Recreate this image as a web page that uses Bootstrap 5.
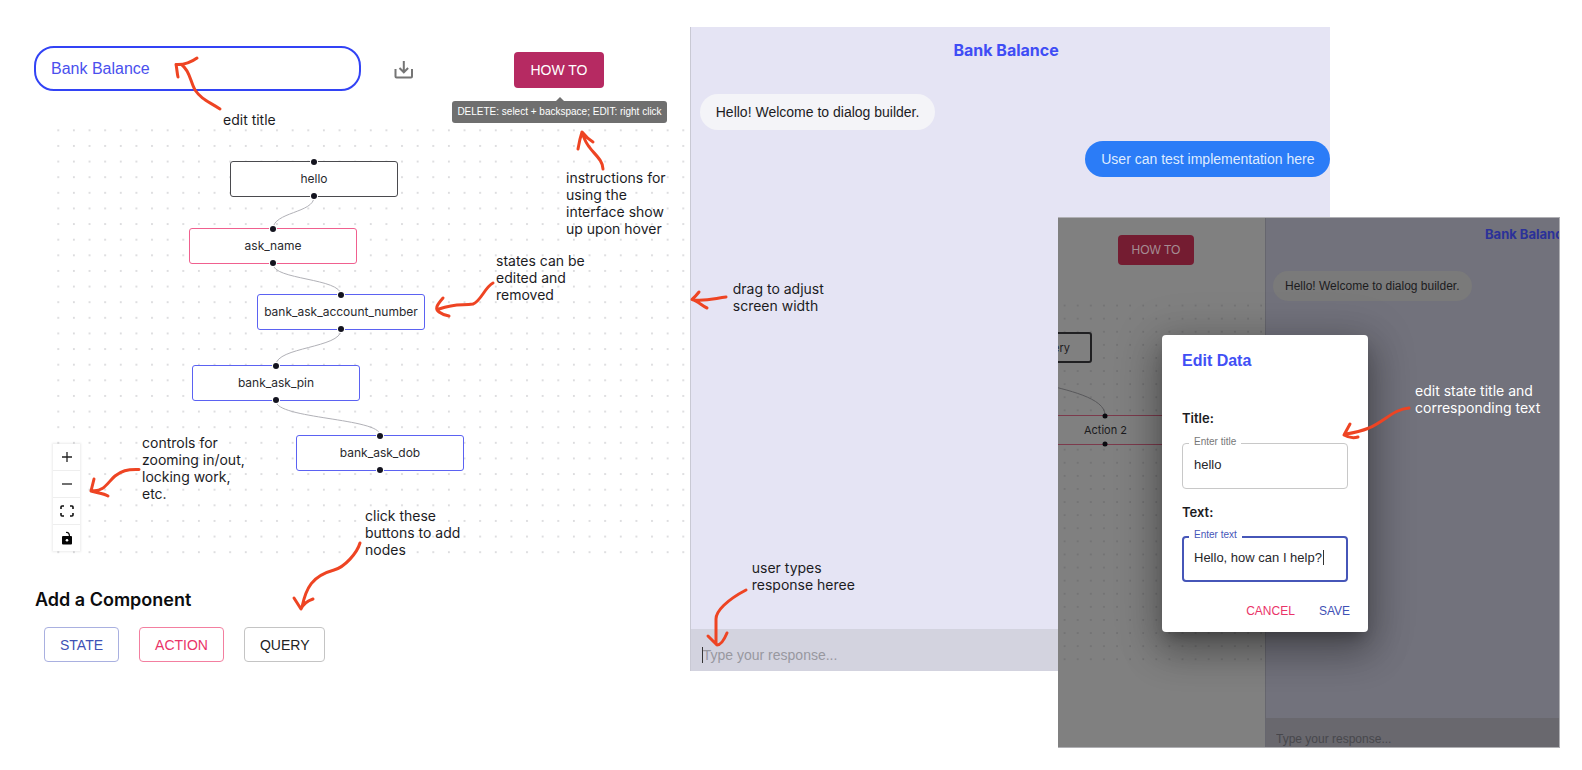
<!DOCTYPE html>
<html lang="en">
<head>
<meta charset="utf-8">
<meta name="viewport" content="width=device-width, initial-scale=1">
<title>Dialog Builder</title>
<link href="https://cdn.jsdelivr.net/npm/bootstrap@5.3.0/dist/css/bootstrap.min.css" rel="stylesheet">
<style>
  body { font-family: Inter, "Liberation Sans", sans-serif; color: #1c1c1f; background: #fff; }
  .board { padding: 27px 0 98px; }
  .builder { width: 43.6%; }
  .chat { width: 40.5%; background: #e5e4f4; border-left: 1px solid #c9c9d4; }

  /* builder header */
  .builder-head { padding: 19px 0 0 34px; height: 64px; }
  .title-input { width: 327px; height: 45px; border: 2px solid #3243f5; border-radius: 20px; padding: 0 15px; font: 16px/24px "Liberation Sans", sans-serif; color: #4a50ee; background: #fff; }
  .icon-btn { width: 24px; height: 24px; margin-left: 31px; margin-right: 98px; }
  .mui-btn { font: 14px/20px "Liberation Sans", sans-serif; border-radius: 4px; padding: 0 15px; height: 35px; }
  .howto { width: 90px; height: 36px; margin-top: 2px; background: #b62a62; color: #fff; }
  .howto:hover { background: #b62a62; color: #fff; }
  .hint { top: 74px; left: 452px; width: 215px; height: 22px; background: #6f6f6f; color: #fff; border-radius: 3px; font: 10px/22px "Liberation Sans", sans-serif; z-index: 3; }
  .hint::before { content: ""; position: absolute; left: 103px; top: -4px; border: 5px solid transparent; border-top: 0; border-bottom-color: #6f6f6f; }

  /* flow canvas */
  .flow { height: 440px; margin-top: 31px; }
  .flow > svg { position: absolute; inset: 0; width: 100%; height: 100%; }
  .node { position: absolute; width: 168px; height: 36px; border: 1px solid #5b62f2; border-radius: 3px; background: #fff; font-size: 12px; line-height: 34px; text-align: center; color: #2a2a2e; }
  .node::before, .node::after { content: ""; position: absolute; left: 50%; width: 6px; height: 6px; margin-left: -3px; border-radius: 50%; background: #14141f; box-shadow: 0 0 0 1px #fff; }
  .node::before { top: -3px; }
  .node::after { bottom: -3px; }
  .n-hello { left: 230px; top: 39px; border-color: #4a4a4e; }
  .n-name { left: 189px; top: 106px; border-color: #f0608f; }
  .n-account { left: 257px; top: 172px; }
  .n-pin { left: 192px; top: 243px; }
  .n-dob { left: 296px; top: 313px; }
  .controls { left: 53px; top: 322px; width: 27px; box-shadow: 0 0 2px 1px rgba(0,0,0,.08); }
  .controls button { height: 27px; background: #fff; border: 0; border-bottom: 1px solid #eee; padding: 0; }
  .controls button:last-child { height: 26px; border-bottom: 0; }

  .add-title { font-size: 18px; font-weight: 600; line-height: 24px; padding: 26px 0 0 35px; color: #0c0c0e; }
  .add-row { padding: 15px 0 9px 44px; gap: 20px; }
  .b-state { border: 1px solid #a9b0e0; color: #3f51b5; }
  .b-action { border: 1px solid #f37fa0; color: #ea3368; }
  .b-query { border: 1px solid #c4c4c4; color: #222; }

  /* conversation */
  .chat-title { font-size: 16px; line-height: 24px; font-weight: 700; color: #3f4df5; padding: 11px 9px 0 0; }
  .bubble { height: 36px; line-height: 36px; border-radius: 18px; padding: 0 16px; font-size: 14px; font-family: "Liberation Sans", sans-serif; }
  .b-bot { background: #f4f4f8; margin: 32px 0 0 9px; }
  .b-user { background: #2b7cf7; color: #dfebff; margin-top: 11px; }
  .chat-bar { background: #d3d3df; height: 42px; }
  .chat-bar input, .dim-bar input { border: 0; background: transparent; width: 100%; outline: 0; padding: 0; font-family: "Liberation Sans", sans-serif; }
  .chat-bar input { font-size: 14px; height: 32px; margin: 10px 0 0 12px; }
  .chat-bar input::placeholder { color: #98989f; opacity: 1; }
  .caret { position: absolute; width: 1px; height: 16px; background: #333; }
  .chat-bar .caret { left: 11px; top: 18px; }

  /* hand-drawn notes */
  .note { position: absolute; font-size: 14px; line-height: 17px; white-space: nowrap; z-index: 4; margin: 0; }
  .arrows { position: absolute; left: 0; top: 0; width: 100%; height: 100%; overflow: visible; pointer-events: none; z-index: 5; fill: none; stroke: #ee4423; stroke-width: 3; stroke-linecap: round; stroke-linejoin: round; }

  /* second window with the edit dialog */
  .shot { position: absolute; right: 22px; top: 217px; width: 502px; height: 531px; z-index: 6; background: #808080; border: solid #b0b0b4; border-width: 1px 1px 1px 0; }
  .shot-clip { overflow: hidden; }
  .dim-left { width: 207px; }
  .dim-right { background: #72727c; border-left: 1px solid #66666e; min-width: 0; }
  .dim-howto { width: 76px; height: 30px; margin: 17px 0 0 60px; padding: 0; font-size: 12px; background: #741c31; color: #a58c93; }
  .dim-title { font-size: 13px; line-height: 20px; font-weight: 700; color: #2b3199; padding: 6px 0 0 219px; white-space: nowrap; }
  .dim-bubble { height: 30px; line-height: 30px; border-radius: 15px; background: #7a7a7a; padding: 0 12px; margin: 27px 0 0 7px; font-size: 12px; font-family: "Liberation Sans", sans-serif; color: #1c1c1e; }
  .dim-bar { background: #69686e; height: 29px; }
  .dim-bar input { font-size: 12px; height: 22px; margin: 10px 0 0 10px; }
  .dim-bar input::placeholder { color: #47474c; opacity: 1; }
  .dim-flow { position: absolute; left: 0; top: 0; width: 207px; height: 100%; }
  .dim-node { position: absolute; background: #808080; font-size: 11px; color: #1c1c1e; text-align: center; line-height: 28px; height: 30px; }
  .d-query { left: -50px; top: 114px; width: 84px; height: 31px; border: 2px solid #202022; border-radius: 3px; text-align: right; padding-right: 20px; }
  .d-action { left: -22px; top: 197px; width: 139px; border: 1px solid #7c3a4c; }

  .edit-card { position: absolute; left: 104px; top: 117px; width: 206px; padding: 15px 18px 9px 20px; background: #fff; border-radius: 4px; box-shadow: 0 9px 12px -5px rgba(0,0,0,.25), 0 18px 36px 4px rgba(0,0,0,.25), 0 6px 44px 8px rgba(0,0,0,.15); z-index: 2; }
  .edit-card h2 { font: bold 16px/22px "Liberation Sans", sans-serif; color: #414ff5; margin: 0 0 36px; }
  .edit-card h3 { font-size: 13px; line-height: 20px; font-weight: 600; margin: 0; color: #1c1c1f; }
  .field { position: relative; margin: 15px 0 13px; }
  .field input { display: block; width: 166px; height: 46px; border: 1px solid #c8c8c8; border-radius: 4px; padding: 0 11px 4px; font: 13px/20px "Liberation Sans", sans-serif; color: #26262a; outline: 0; background: #fff; }
  .field label { position: absolute; left: 7px; top: -7px; padding: 0 5px; font: 10px/12px "Liberation Sans", sans-serif; color: #777; background: #fff; }
  .field.on { margin: 14px 0 17px; }
  .field.on input { border: 2px solid #4656b8; padding-left: 10px; }
  .field.on label { color: #4656b8; }
  .field .caret { left: 141px; top: 14px; height: 15px; }
  .edit-card .btn { font: 12px/20px "Liberation Sans", sans-serif; padding: 2px 0; border: 0; }
  .b-cancel { color: #ea3368; }
  .b-save { color: #3f51b5; }
</style>
</head>
<body>
<main class="board position-relative d-flex">

  <section class="builder position-relative">
    <div class="builder-head d-flex align-items-center">
      <input class="title-input" type="text" value="Bank Balance" aria-label="Dialog title">
      <button class="icon-btn btn p-0 border-0 d-flex flex-shrink-0" type="button" aria-label="Download">
        <svg width="24" height="24" viewBox="0 0 24 24" fill="none" stroke="#757575" stroke-width="2"><path d="M3.500 12v7.500q0 1 1 1h14.500q1 0 1-1V12M11.800 4v11M7.500 11l4.300 4.300 4.300-4.300"/></svg>
      </button>
      <button class="mui-btn howto btn border-0 flex-shrink-0" type="button">HOW TO</button>
    </div>
    <div class="hint position-absolute text-center text-nowrap" role="tooltip">DELETE: select + backspace; EDIT: right click</div>

    <div class="flow position-relative">
      <svg aria-hidden="true">
        <defs>
          <pattern id="dots" x="50.500" y=".5" width="15.625" height="15.625" patternUnits="userSpaceOnUse"><circle cx="7.800" cy="7.800" r=".7" fill="#a8a8ad"/></pattern>
        </defs>
        <rect x="51" y="1" width="639" height="436" fill="url(#dots)"/>
        <g fill="none" stroke="#b1b1b7">
          <path d="M314 75C314 91 273 90 273 107"/>
          <path d="M273 142C273 158 341 156 341 173"/>
          <path d="M341 208C341 226 276 225 276 243"/>
          <path d="M276 279C276 297 380 296 380 313"/>
        </g>
      </svg>
      <div class="node n-hello">hello</div>
      <div class="node n-name">ask_name</div>
      <div class="node n-account">bank_ask_account_number</div>
      <div class="node n-pin">bank_ask_pin</div>
      <div class="node n-dob">bank_ask_dob</div>
      <div class="controls position-absolute d-flex flex-column">
        <button type="button" aria-label="Zoom in"><svg class="d-block mx-auto" width="12" height="12" stroke="#222" stroke-width="1.300"><path d="M6 1v10M1 6h10"/></svg></button>
        <button type="button" aria-label="Zoom out"><svg class="d-block mx-auto" width="12" height="12" stroke="#222" stroke-width="1.300"><path d="M1 6h10"/></svg></button>
        <button type="button" aria-label="Fit view"><svg class="d-block mx-auto" width="14" height="12" fill="none" stroke="#111" stroke-width="1.600"><path d="M1 4V2q0-1 1-1h2M10 1h2q1 0 1 1v2M13 8v2q0 1-1 1h-2M4 11H2q-1 0-1-1V8"/></svg></button>
        <button type="button" aria-label="Lock"><svg class="d-block mx-auto" width="12" height="14" viewBox="0 0 12 14"><path d="M5 1.500Q8.500 1 8.500 5.500" fill="none" stroke="#111" stroke-width="1.200"/><rect x="1" y="5" width="10" height="8.500" rx="1" fill="#050505"/><circle cx="6" cy="9.200" r="1.300" fill="#fff"/></svg></button>
      </div>
    </div>

    <h2 class="add-title m-0">Add a Component</h2>
    <div class="add-row d-flex">
      <button class="mui-btn b-state btn" type="button">STATE</button>
      <button class="mui-btn b-action btn" type="button">ACTION</button>
      <button class="mui-btn b-query btn" type="button">QUERY</button>
    </div>

    <p class="note" style="left:223px;top:84px">edit title</p>
    <p class="note" style="left:566px;top:142px">instructions for<br>using the<br>interface show<br>up upon hover</p>
    <p class="note" style="left:496px;top:225px">states can be<br>edited and<br>removed</p>
    <p class="note" style="left:142px;top:407px">controls for<br>zooming in/out,<br>locking work,<br>etc.</p>
    <p class="note" style="left:365px;top:480px">click these<br>buttons to add<br>nodes</p>
    <svg class="arrows" aria-hidden="true"><g transform="translate(0 -27)">
      <path d="M220 109C208 101 202 100 195 90C190 81 190 71 182 65M197 58C190 63 184 65 176 64.500C177 69 177 73 178 77"/>
      <path d="M603 169C603 158 590 152 585 140L582 133M593 142C588 139 586 137 582 132C580 138 579 143 578 149"/>
      <path d="M493 283C485 287 481 301 473 304C463 306 457 303 439 309M443 298C436 306 435 309 439 312Q443 315 449 316"/>
      <path d="M139 469.500C127 469 121 471 115 476C107 483 104 492 92 490.500M94 479L91 491C97 493 103 493 108 496"/>
      <path d="M360 543C357 553 345 567 334 570C312 576 306 588 302 607M294 598L301 609Q304 602 313 599"/>
    </g></svg>
  </section>

  <section class="chat position-relative d-flex flex-column">
    <h2 class="chat-title m-0 text-center">Bank Balance</h2>
    <div class="bubble b-bot align-self-start">Hello! Welcome to dialog builder.</div>
    <div class="bubble b-user align-self-end">User can test implementation here</div>
    <div class="chat-bar mt-auto position-relative overflow-hidden">
      <input type="text" placeholder="Type your response..." aria-label="Response"><span class="caret"></span>
    </div>
    <p class="note" style="left:42px;top:253px">drag to adjust<br>screen width</p>
    <p class="note" style="left:61px;top:532px">user types<br>response heree</p>
    <svg class="arrows" aria-hidden="true"><g transform="translate(-691 -27)">
      <path d="M726 297C716 298 708 301 695 300M699 292Q695 297 692 299.500C698 301 702 306 707 308"/>
      <path d="M746 590C727 600 716 611 716 619V643M708 636L717 645Q722 645 727 633"/>
    </g></svg>
  </section>

  <section class="shot">
    <div class="shot-clip position-relative d-flex w-100 h-100">
      <div class="dim-left flex-shrink-0">
        <div class="dim-flow">
          <svg class="w-100 h-100" aria-hidden="true">
            <defs><pattern id="dots2" x="0" y="81" width="13.100" height="13.100" patternUnits="userSpaceOnUse"><circle cx="6.600" cy="6.500" r=".7" fill="#5f5f62"/></pattern></defs>
            <rect y="81" width="207" height="366" fill="url(#dots2)"/>
            <path d="M-20 165C10 172 47 180 47 197" fill="none" stroke="#58585b"/>
          </svg>
          <div class="dim-node d-query">query</div>
          <div class="dim-node d-action">Action 2</div>
          <svg class="position-absolute top-0 start-0" width="60" height="240" aria-hidden="true"><g fill="#0a0a0f"><circle cx="47" cy="198" r="2.500"/><circle cx="47" cy="226" r="2.500"/></g></svg>
        </div>
        <button class="mui-btn dim-howto btn border-0 position-relative" type="button">HOW TO</button>
      </div>
      <div class="dim-right flex-grow-1 d-flex flex-column">
        <div class="dim-title">Bank Balance</div>
        <div class="dim-bubble align-self-start">Hello! Welcome to dialog builder.</div>
        <div class="dim-bar mt-auto overflow-hidden"><input type="text" placeholder="Type your response..." aria-label="Response"></div>
      </div>

      <form class="edit-card">
        <h2>Edit Data</h2>
        <h3>Title:</h3>
        <div class="field">
          <input id="f-title" type="text" value="hello"><label for="f-title">Enter title</label>
        </div>
        <h3>Text:</h3>
        <div class="field on">
          <input id="f-text" type="text" value="Hello, how can I help?"><label for="f-text">Enter text</label><span class="caret"></span>
        </div>
        <div class="d-flex justify-content-end gap-4">
          <button class="b-cancel btn" type="button">CANCEL</button>
          <button class="b-save btn" type="button">SAVE</button>
        </div>
      </form>
      <p class="note text-white" style="left:357px;top:164px">edit state title and<br>corresponding text</p>
      <svg class="arrows" aria-hidden="true"><g transform="translate(-1058 -218)">
        <path d="M1409 408C1394 409 1385 421 1369 428Q1359 432 1346 434M1350 424L1344 435Q1351 439 1358 437"/>
      </g></svg>
    </div>
  </section>
</main>
<script src="https://cdn.jsdelivr.net/npm/bootstrap@5.3.0/dist/js/bootstrap.bundle.min.js"></script>
</body>
</html>
